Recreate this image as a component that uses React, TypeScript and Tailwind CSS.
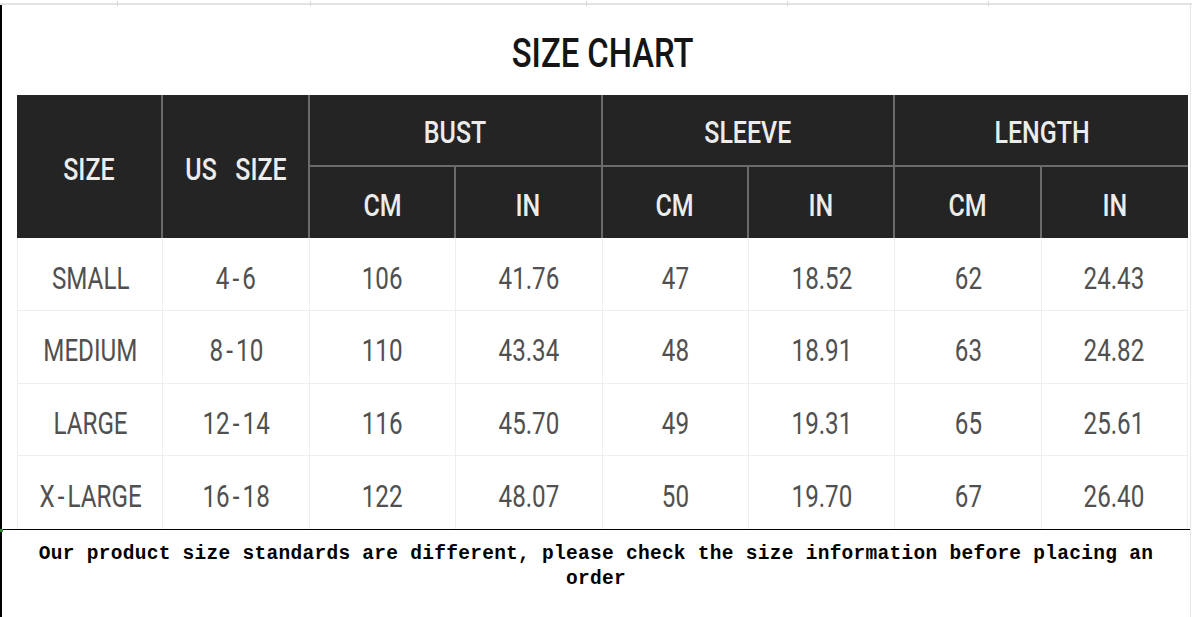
const header = "font-['Roboto',sans-serif] font-medium text-[32px] text-[#ececec]"
const body = "font-['Roboto',sans-serif] text-[31px] text-[#505050]"

const rows = [
  ["SMALL", "4-6", "106", "41.76", "47", "18.52", "62", "24.43"],
  ["MEDIUM", "8-10", "110", "43.34", "48", "18.91", "63", "24.82"],
  ["LARGE", "12-14", "116", "45.70", "49", "19.31", "65", "25.61"],
  ["X-LARGE", "16-18", "122", "48.07", "50", "19.70", "67", "26.40"],
]

const Narrow = ({ children }: { children: React.ReactNode }) => (
  <span className="inline-block whitespace-pre scale-x-[0.78]">{children}</span>
)

// spreads the hyphen a little, the way the chart's font draws it
const Cell = ({ text }: { text: string }) => {
  if (!text.includes("-")) return <Narrow>{text}</Narrow>
  const [a, b] = text.split("-")
  return (
    <Narrow>
      {a}
      <span className="mx-[4px]">-</span>
      {b}
    </Narrow>
  )
}

const App = () => {
  return (
    <div className="w-[1192px] h-[617px] bg-white overflow-hidden flex flex-col">
      <div className="relative mt-[3px] h-[2px] bg-[#e2e2e2]">
        <div className="absolute left-[117px] -top-[2px] w-px h-[5px] bg-[#d6d6d6]" />
        <div className="absolute left-[310px] -top-[2px] w-px h-[5px] bg-[#d6d6d6]" />
        <div className="absolute left-[586px] -top-[2px] w-px h-[5px] bg-[#d6d6d6]" />
        <div className="absolute left-[787px] -top-[2px] w-px h-[5px] bg-[#d6d6d6]" />
        <div className="absolute left-[988px] -top-[2px] w-px h-[5px] bg-[#d6d6d6]" />
      </div>

      <div className="relative flex-1 w-[1191px] border-l-2 border-black border-r border-r-[#e6e6e6] flex flex-col">
        <div className="ml-[15px] w-[1171px] h-[90px] flex items-center justify-center pt-[6px]">
          <h1 className="font-['Roboto',sans-serif] font-medium text-[41px] leading-none text-[#151515]">
            <span className="inline-block scale-x-[0.8]">SIZE CHART</span>
          </h1>
        </div>

        <div className="ml-[15px] w-[1171px]">
          <div className={`grid grid-cols-8 grid-rows-[72px_71px] bg-[#242424] ${header}`}>
            <div className="row-span-2 flex items-center justify-center pt-[4px] border-r-2 border-[#6a6a6a]">
              <Narrow>SIZE</Narrow>
            </div>
            <div className="row-span-2 flex items-center justify-center pt-[4px] border-r-2 border-[#6a6a6a]">
              <Narrow>US   SIZE</Narrow>
            </div>
            {["BUST", "SLEEVE", "LENGTH"].map((h, i) => (
              <div
                key={h}
                className={`col-span-2 flex items-center justify-center pt-[4px] border-b-2 border-[#6a6a6a] ${i < 2 ? "border-r-2" : ""}`}
              >
                <Narrow>{h}</Narrow>
              </div>
            ))}
            {["CM", "IN", "CM", "IN", "CM", "IN"].map((h, i) => (
              <div
                key={i}
                className={`flex items-center justify-center pt-[4px] border-[#6a6a6a] ${i < 5 ? "border-r-2" : ""}`}
              >
                <Narrow>{h}</Narrow>
              </div>
            ))}
          </div>

          <div className={`grid grid-cols-8 auto-rows-[72.75px] ${body}`}>
            {rows.map((row, r) =>
              row.map((cell, c) => (
                <div
                  key={`${r}-${c}`}
                  className={`flex items-center justify-center pt-[10px] border-r border-[#eeeeee] ${c === 0 ? "border-l" : ""} ${r < 3 ? "border-b" : ""}`}
                >
                  <Cell text={cell} />
                </div>
              ))
            )}
          </div>
        </div>

        <div className="-ml-[2px] h-px bg-black" />
        <div className="absolute -left-[2px] top-[524px] w-[3px] h-[3px] bg-[#2e8b3a]" />

        <p className="px-[30px] pt-[12px] text-center font-['Liberation_Mono',monospace] font-bold text-[19.5px] tracking-[0.28px] leading-[25px] text-black">
          Our product size standards are different, please check the size information before placing an order
        </p>
      </div>
    </div>
  )
}

export default App
